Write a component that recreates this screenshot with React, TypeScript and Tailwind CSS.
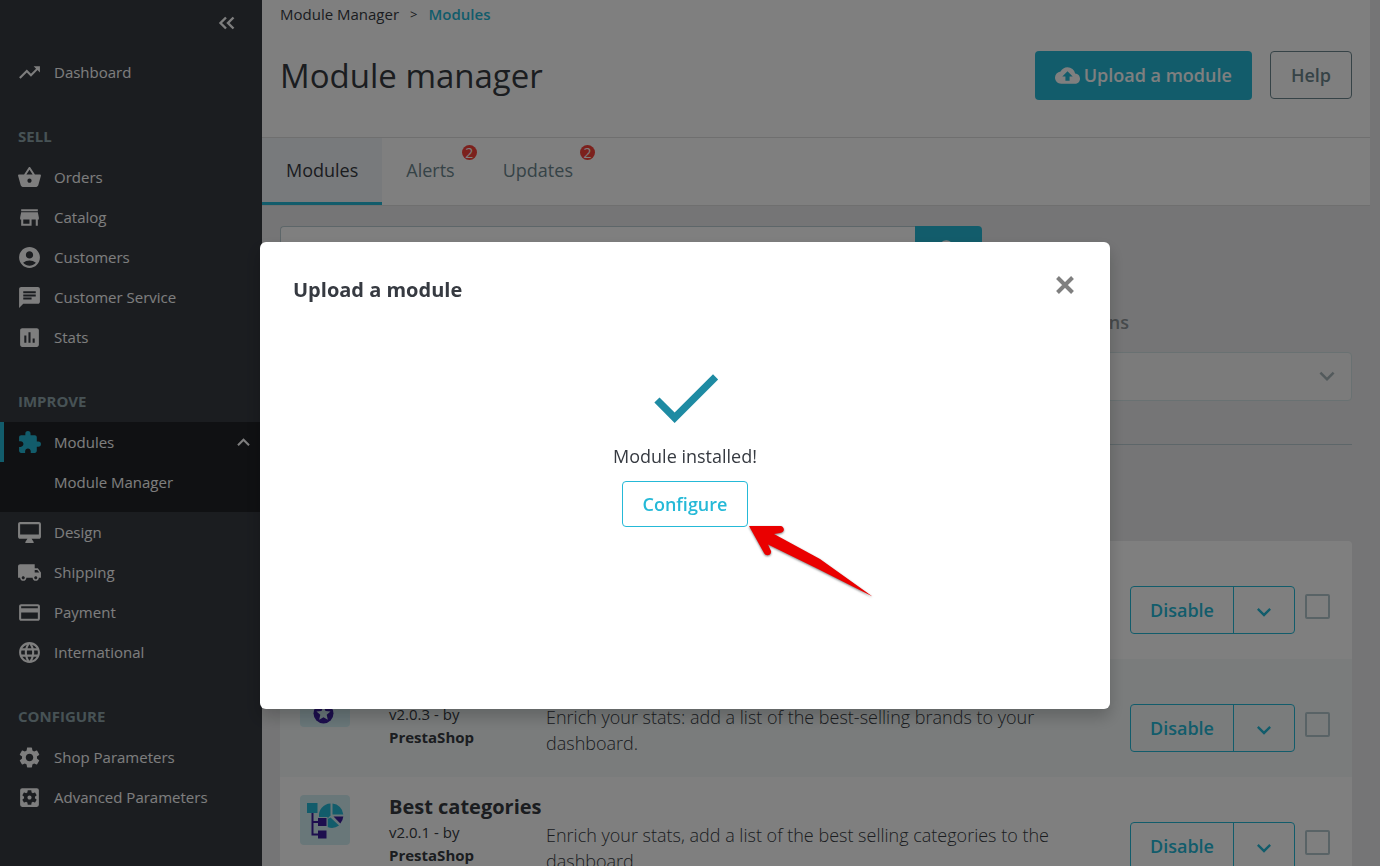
import React, { useState } from 'react';
import {
  MdTrendingUp,
  MdStore,
  MdAccountCircle,
  MdChat,
  MdAssessment,
  MdExtension,
  MdLocalShipping,
  MdPayment,
  MdLanguage,
  MdSettings,
  MdSettingsApplications,
  MdKeyboardArrowUp,
  MdKeyboardArrowDown,
  MdCloudUpload,
  MdSearch,
  MdCheck
} from 'react-icons/md';

type IconProps = { className?: string };

type NavItem = {
  label: string;
  icon: React.ComponentType<IconProps>;
  children?: string[];
};

type NavSection = {
  title?: string;
  items: NavItem[];
};

const BasketIcon = ({ className }: IconProps) => (
  <svg viewBox="0 0 24 24" className={className} fill="currentColor" aria-hidden="true">
    <path d="M17.210 9l-4.380-6.560c-.19-.28-.51-.42-.83-.42-.32 0-.64.140-.83.430L6.790 9H2c-.55 0-1 .45-1 1 0 .09.010.18.040.27l2.540 9.270c.23.84 1 1.460 1.920 1.460h13c.92 0 1.690-.62 1.930-1.460l2.540-9.270L23 10c0-.55-.45-1-1-1h-4.790zM9 9l3-4.400L15 9H9zm3 8c-1.100 0-2-.9-2-2s.9-2 2-2 2 .9 2 2-.9 2-2 2z" />
  </svg>
);

const DesktopIcon = ({ className }: IconProps) => (
  <svg viewBox="0 0 24 24" className={className} fill="currentColor" aria-hidden="true">
    <path d="M21 2H3c-1.100 0-2 .9-2 2v12c0 1.100.9 2 2 2h7l-2 3v1h8v-1l-2-3h7c1.100 0 2-.9 2-2V4c0-1.100-.9-2-2-2zm0 12H3V4h18v10z" />
  </svg>
);

const sections: NavSection[] = [
  {
    items: [{ label: 'Dashboard', icon: MdTrendingUp }]
  },
  {
    title: 'SELL',
    items: [
      { label: 'Orders', icon: BasketIcon },
      { label: 'Catalog', icon: MdStore },
      { label: 'Customers', icon: MdAccountCircle },
      { label: 'Customer Service', icon: MdChat },
      { label: 'Stats', icon: MdAssessment }
    ]
  },
  {
    title: 'IMPROVE',
    items: [
      { label: 'Modules', icon: MdExtension, children: ['Module Manager'] },
      { label: 'Design', icon: DesktopIcon },
      { label: 'Shipping', icon: MdLocalShipping },
      { label: 'Payment', icon: MdPayment },
      { label: 'International', icon: MdLanguage }
    ]
  },
  {
    title: 'CONFIGURE',
    items: [
      { label: 'Shop Parameters', icon: MdSettings },
      { label: 'Advanced Parameters', icon: MdSettingsApplications }
    ]
  }
];

const tabs = [
  { label: 'Modules', count: 0 },
  { label: 'Alerts', count: 2 },
  { label: 'Updates', count: 2 }
];

const BrandsIcon = () => (
  <svg viewBox="0 0 50 50" className="size-[50px] rounded-sm bg-[#d3eef3]" aria-hidden="true">
    <path d="M12 10h22v14H12z" fill="#25b9d7" />
    <circle cx="23.500" cy="36.500" r="10" fill="#3a1d9c" />
    <path d="M23.500 29.500l2 4.500 5 .5-3.800 3.300 1.100 4.900-4.300-2.500-4.300 2.500 1.100-4.900-3.800-3.300 5-.5z" fill="#d3eef3" />
  </svg>
);

const CategoriesIcon = () => (
  <svg viewBox="0 0 50 50" className="size-[50px] rounded-sm bg-[#d3eef3]" aria-hidden="true">
    <path d="M30.500 8.500v12l-7 7L19 22A12 12 0 0 1 30.500 8.500z" fill="#25b9d7" />
    <path d="M32.500 8.500A12 12 0 0 1 43.300 19.500H32.500z" fill="#25b9d7" />
    <path d="M30.500 22.500L39 30.500A12 12 0 0 1 27.500 32V24z" fill="#25b9d7" />
    <path d="M33.500 21.500H43.300A12 12 0 0 1 40.300 28.500z" fill="#3a1d9c" />
    <path d="M12.500 18v21.500H19M12.500 27H19" fill="none" stroke="#3a1d9c" strokeWidth="2" />
    <path d="M17 22h10.500v10H17z" fill="#d3eef3" />
    <path d="M7 8h10.500v10H7z" fill="#25b9d7" />
    <path d="M18 23h8.500v8H18zM18 35.500h8.500v8H18zM12 26h7v2h-7z" fill="#3a1d9c" />
  </svg>
);

const modules = [
  {
    id: 'first',
    name: '',
    version: '',
    description: '',
    icon: null
  },
  {
    id: 'brands',
    name: 'Best-selling brands',
    version: 'v2.0.3',
    description: 'Enrich your stats: add a list of the best-selling brands to your dashboard.',
    icon: <BrandsIcon />
  },
  {
    id: 'categories',
    name: 'Best categories',
    version: 'v2.0.1',
    description: 'Enrich your stats, add a list of the best selling categories to the dashboard.',
    icon: <CategoriesIcon />
  }
];

const Sidebar = () => (
  <aside className="w-[262px] shrink-0 bg-[#363a41] text-[15px] text-[#fcfcfc]">
    <div className="flex h-[52px] justify-end pr-[27px] pt-[16px]">
      <button type="button" aria-label="Collapse menu" className="h-[14px]">
        <svg viewBox="0 0 17 14" className="h-[14px] w-[17px]" fill="none" stroke="currentColor" strokeWidth="2.400">
          <path d="M8 1.500L2.500 7 8 12.500M15.500 1.500L10 7l5.500 5.500" />
        </svg>
      </button>
    </div>
    <nav>
      {sections.map((section, i) => (
        <div key={i} className={section.title ? 'mt-[34px]' : ''}>
          {section.title && (
            <h2 className="mb-[11px] pl-[18px] text-[15px] leading-5 font-bold text-[#8ea5aa]">{section.title}</h2>
          )}
          <ul>
            {section.items.map(({ label, icon: Icon, children }) => (
              <li key={label} className={children ? 'bg-[#202226] pb-[10px]' : ''}>
                <a
                  href="#"
                  className={
                    children
                      ? 'flex h-10 items-center gap-3 border-l-4 border-[#25b9d7] pl-[13px] pr-[6px]'
                      : 'flex h-10 items-center gap-3 pl-[17px] pr-2'
                  }
                >
                  <Icon className={children ? 'size-[25px] text-[#25b9d7]' : 'size-[25px]'} />
                  <span className="flex-1">{label}</span>
                  {children && <MdKeyboardArrowUp className="size-[25px]" />}
                </a>
                {children?.map(child => (
                  <a key={child} href="#" className="flex h-10 items-center pl-[54px]">
                    {child}
                  </a>
                ))}
              </li>
            ))}
          </ul>
        </div>
      ))}
    </nav>
  </aside>
);

const Header = () => (
  <header className="mr-[10px] bg-white">
    <div className="h-[137px] px-[18px] pt-1">
      <nav className="flex gap-[11px] text-[15px] leading-5" aria-label="Breadcrumb">
        <a href="#">Module Manager</a>
        <span className="text-[13px]">&gt;</span>
        <a href="#" className="font-semibold text-[#25b9d7]">Modules</a>
      </nav>
      <div className="mt-[27px] flex items-start justify-between">
        <h1 className="text-[33px] leading-[50px] font-normal">Module manager</h1>
        <div className="flex gap-[18px] text-[18px] font-semibold">
          <button type="button" className="flex h-[49px] items-center gap-1 rounded bg-[#25b9d7] px-5 text-white">
            <MdCloudUpload className="size-[25px]" />
            Upload a module
          </button>
          <button type="button" className="h-12 rounded border border-[#6c868e] px-5 text-[#6c868e]">
            Help
          </button>
        </div>
      </div>
    </div>
    <div className="flex border-y border-[#dfdfdf]">
      {tabs.map((tab, i) => (
        <a
          key={tab.label}
          href="#"
          className={
            i === 0
              ? 'relative flex h-[67px] items-center border-b-3 border-[#25b9d7] bg-[#f1f5f9] px-6 text-[18px]'
              : 'relative flex h-[67px] items-center border-b-3 border-transparent px-6 text-[18px] text-[#6c868e]'
          }
        >
          {tab.label}
          {tab.count > 0 && (
            <span className="absolute right-[2px] top-[7px] size-[15px] rounded-full bg-[#f8433a] text-center text-[14px] leading-[15px] text-white">
              {tab.count}
            </span>
          )}
        </a>
      ))}
    </div>
  </header>
);

const ModuleList = () => (
  <ul className="overflow-hidden rounded bg-white">
    {modules.map((module, i) => (
      <li
        key={module.id}
        className={
          i % 2 === 1
            ? 'flex h-[118px] items-start bg-[#f4f9f9] pl-5 pr-[22px]'
            : 'flex h-[118px] items-start pl-5 pr-[22px]'
        }
      >
        <div className="mt-[18px] w-[89px] shrink-0">{module.icon}</div>
        {module.name && (
          <div className="mt-[16px] w-[157px] shrink-0">
            <h3 className="text-[20px] leading-[28px] font-bold whitespace-nowrap">{module.name}</h3>
            <p className="text-[15px] leading-[23px]">
              {module.version} - by
              <br />
              <strong>PrestaShop</strong>
            </p>
          </div>
        )}
        <p className="mt-[45px] max-w-[530px] flex-1 text-[18px] leading-[26px] font-light">{module.description}</p>
        <div className="ml-auto mt-[45px] flex shrink-0 items-start gap-[10px]">
          <div className="flex h-12 rounded border border-[#25b9d7] text-[18px] font-semibold text-[#25b9d7]">
            <button type="button" className="w-[103px] border-r border-[#25b9d7]">Disable</button>
            <button type="button" aria-label="More actions" className="flex w-[60px] items-center justify-center pt-1">
              <MdKeyboardArrowDown className="size-[28px]" />
            </button>
          </div>
          <input
            type="checkbox"
            aria-label={`Select ${module.name}`}
            className="mt-2 size-[25px] appearance-none rounded-[2px] border-2 border-[#b3c7cd]"
          />
        </div>
      </li>
    ))}
  </ul>
);

const UploadModal = ({ onClose }: { onClose: () => void }) => (
  <div className="fixed inset-0 flex items-start justify-center bg-black/50 pr-[10px] pt-[242px]">
    <div
      role="dialog"
      aria-labelledby="modal-title"
      className="relative h-[467px] w-[850px] rounded-md bg-white px-[33px] pt-[33px] shadow-[0_8px_16px_0_rgba(0,0,0,0.2)]"
    >
      <div className="flex items-start justify-between">
        <h2 id="modal-title" className="text-[20px] leading-[30px] font-bold">Upload a module</h2>
        <button type="button" onClick={onClose} aria-label="Close" className="mt-px mr-[3px] text-[#7f7f7f]">
          <svg viewBox="0 0 18 18" className="size-[18px]" fill="none" stroke="currentColor" strokeWidth="4">
            <path d="M1.500 1.500l15 15M16.500 1.500l-15 15" />
          </svg>
        </button>
      </div>
      <div className="flex flex-col items-center pt-[49px]">
        <MdCheck className="size-[87px] text-[#1e8ba3]" />
        <p className="text-[18px] leading-[30px]">Module installed!</p>
        <button
          type="button"
          className="mt-[10px] h-[46px] rounded border border-[#25b9d7] px-5 text-[18px] font-semibold text-[#25b9d7]"
        >
          Configure
        </button>
      </div>
      {/* Pointer to the configure button */}
      <svg viewBox="0 0 126 76" className="absolute left-[488px] top-[283px] h-[76px] w-[126px] drop-shadow-[0_1px_1px_rgba(0,0,0,0.5)]" aria-hidden="true">
        <path
          d="M1 1H33C37 2 37 8 32 8L26 9 72 34 124.500 71.500 69 43.500 20 19.500 23 26C24 30 18 32 16 28Z"
          fill="#ea0000"
        />
      </svg>
    </div>
  </div>
);

export default function App() {
  const [modalOpen, setModalOpen] = useState(true);
  const [query, setQuery] = useState('');

  return (
    <div className="flex h-screen overflow-hidden bg-[#eaebec] font-['Open_Sans',sans-serif] text-[#363a41]">
      <Sidebar />
      <main className="min-w-0 flex-1">
        <Header />
        <div className="pl-[18px] pr-[28px] pt-5">
          <form className="flex h-12 w-[702px]" onSubmit={e => e.preventDefault()}>
            <input
              type="text"
              aria-label="Search modules"
              value={query}
              onChange={e => setQuery(e.target.value)}
              className="min-w-0 flex-1 rounded-l border border-r-0 border-[#bbcdd2] bg-white px-4"
            />
            <button type="submit" aria-label="Search" className="flex w-[67px] items-center justify-center rounded-r bg-[#25b9d7] text-white">
              <MdSearch className="size-[26px]" />
            </button>
          </form>
          <div className="mt-[35px] flex justify-end border-b border-[#bbcdd2] pb-[43px]">
            <div className="w-[329px] text-[#6c868e]">
              <label htmlFor="bulk" className="block text-[18px] leading-[26px] font-semibold text-[#8f9599]">
                Bulk actions
              </label>
              <div className="relative mt-[17px]">
                <select
                  id="bulk"
                  disabled
                  className="h-[49px] w-full appearance-none rounded border border-[#d3e2e4] bg-[#f6f6f6] px-4"
                />
                <MdKeyboardArrowDown className="pointer-events-none absolute right-[10px] top-[9px] size-[30px] text-[#a7b4b8]" />
              </div>
            </div>
          </div>
          <div className="mt-[96px]">
            <ModuleList />
          </div>
        </div>
      </main>
      {modalOpen && <UploadModal onClose={() => setModalOpen(false)} />}
    </div>
  );
}
